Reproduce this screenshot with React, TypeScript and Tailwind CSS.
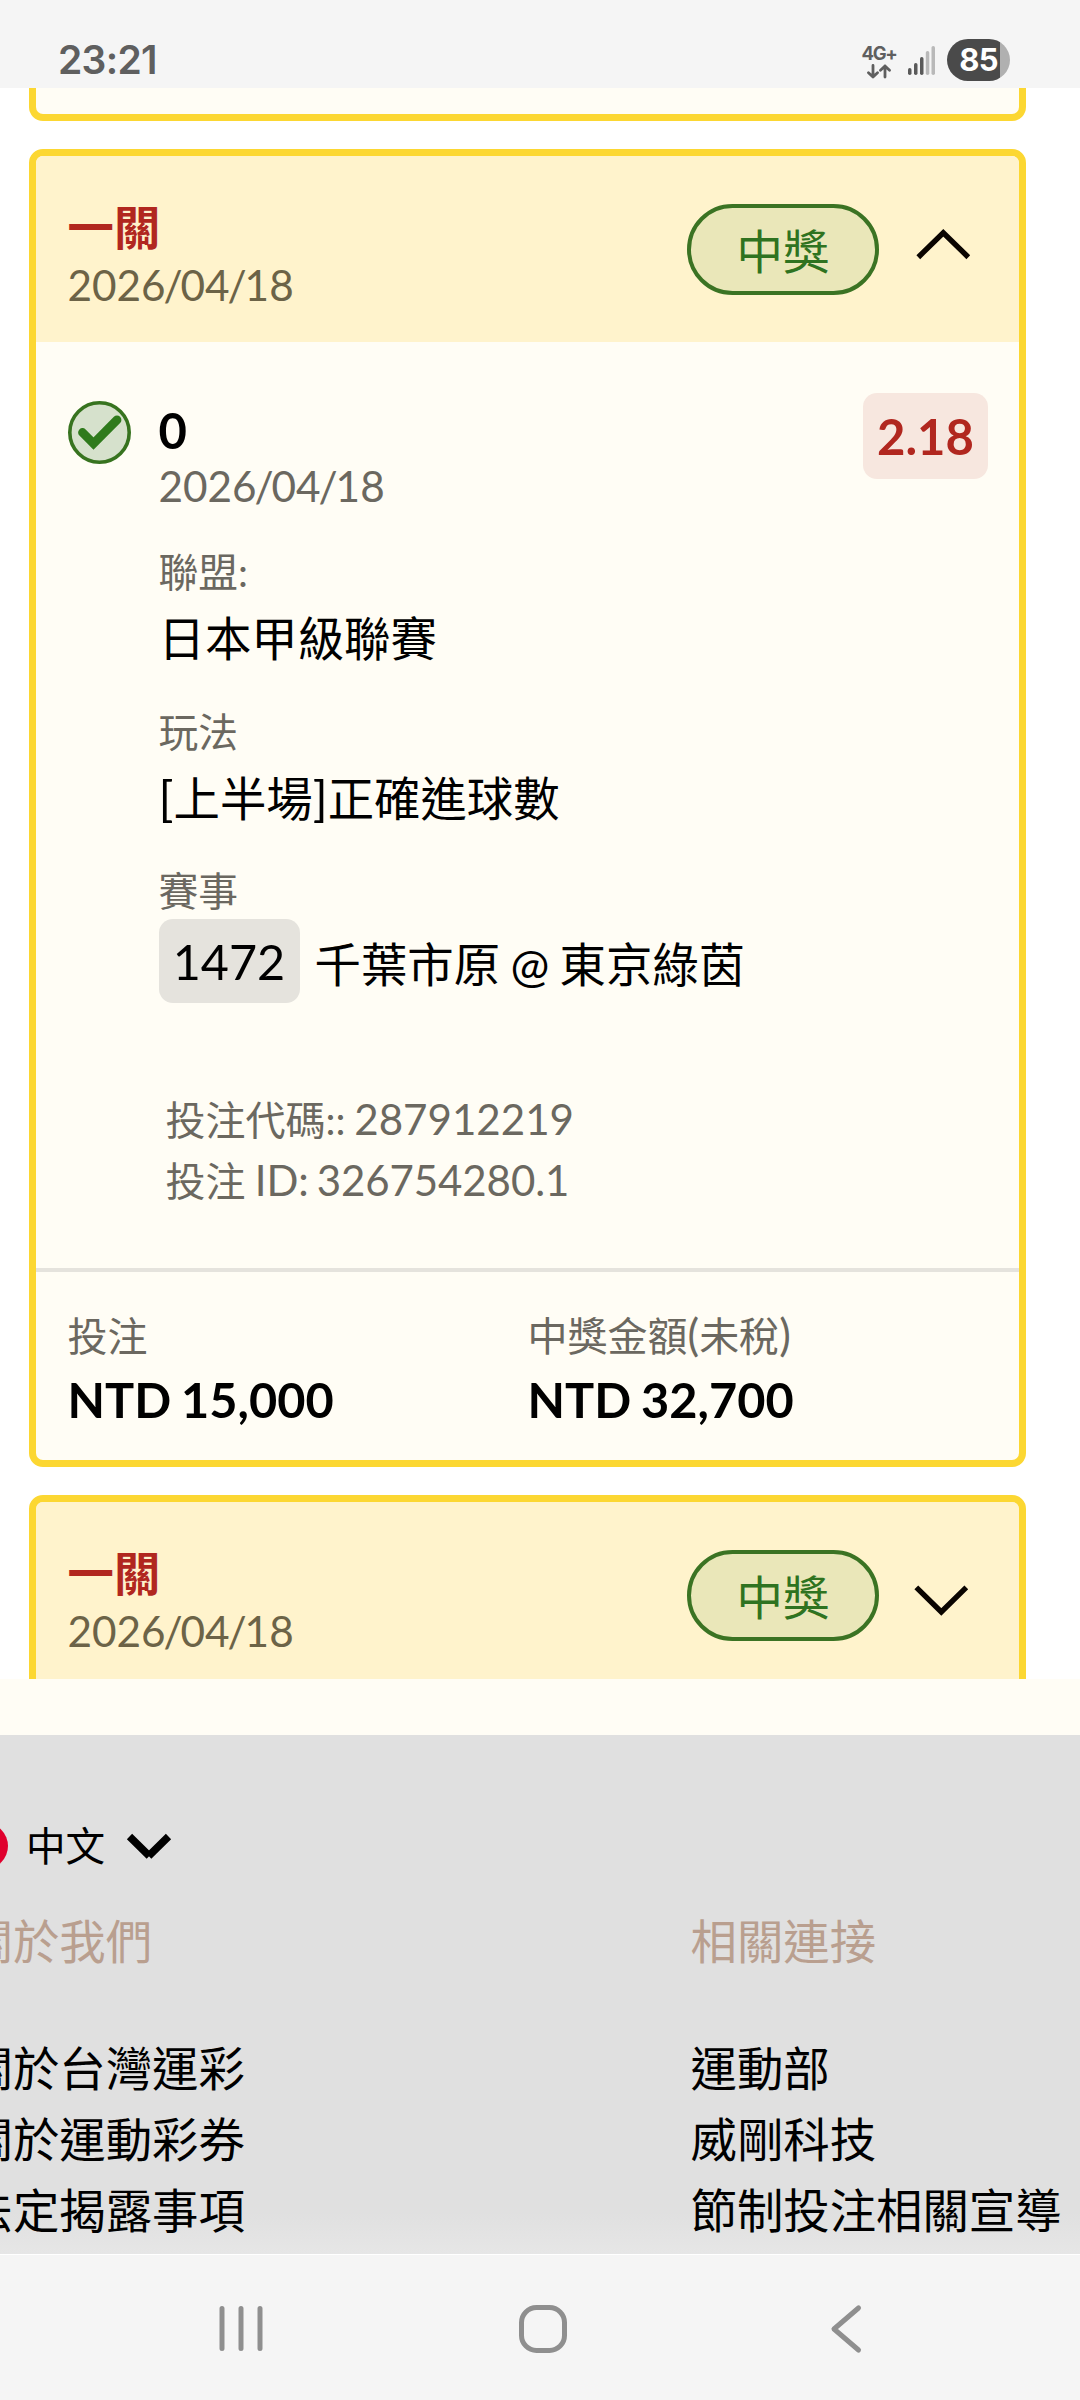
import React from 'react';

interface FooterColumnProps {
  title: string;
  links: string[];
}

const aboutLinks = ['關於台灣運彩', '關於運動彩券', '法定揭露事項'];
const relatedLinks = ['運動部', '威剛科技', '節制投注相關宣導'];

const StatusBar: React.FC = () => (
  <div className="h-[88px] shrink-0 bg-[#f5f5f5] flex items-start pl-[58px] pr-[70px] font-['Inter',sans-serif]">
    <span className="mt-[36px] text-[39px] leading-[48px] font-semibold tracking-[-0.7px] text-[#5f5f5f]">23:21</span>
    <div className="ml-auto mt-[39px] flex items-start">
      <div className="w-[34px] mr-[11px] flex flex-col items-center text-[#5f5f5f]">
        <span className="mt-[5px] text-[18.5px] leading-[18px] font-bold tracking-[-1.3px]">4G+</span>
        <svg className="mt-[2px]" width="24" height="15" viewBox="0 0 24 15" fill="none" stroke="currentColor" strokeWidth="2.8" strokeLinecap="round" strokeLinejoin="round">
          <path d="M6 1.5V13M1.5 8.8L6 13l4.5-4.2M18 13V2M13.5 6.2L18 2l4.5 4.2" />
        </svg>
      </div>
      <svg className="mt-[6px] mr-[12px]" width="28" height="31" viewBox="0 0 28 31">
        <rect x="1" y="23" width="3.5" height="7" rx="1.7" fill="#5a5a5a" />
        <rect x="7" y="18" width="3.5" height="12" rx="1.7" fill="#5a5a5a" />
        <rect x="13" y="12" width="3.5" height="18" rx="1.7" fill="#5a5a5a" />
        <rect x="18.8" y="6" width="3.5" height="24" rx="1.7" fill="#b9b9b9" />
        <rect x="24.5" y="1" width="3.5" height="29" rx="1.7" fill="#b9b9b9" />
      </svg>
      <div className="w-[63px] h-[42px] rounded-full overflow-hidden bg-[linear-gradient(to_right,#4a4a4a_84.5%,#b0b0b0_84.5%)] text-center text-[31px] leading-[42px] font-bold tracking-[-0.8px] text-white">
        85
      </div>
    </div>
  </div>
);

// slashes are tucked in towards the digits on both sides
const DateText: React.FC<{ value: string }> = ({ value }) => (
  <>
    {value.split('/').map((part, i) => (
      <React.Fragment key={i}>
        {i > 0 && <span className="-mx-[2.1px]">/</span>}
        {part}
      </React.Fragment>
    ))}
  </>
);

const TicketHeader: React.FC<{ open: boolean }> = ({ open }) => (
  <div className="h-[186px] bg-[#fff3cc] pl-[31.5px] pr-[46px] flex items-start">
    <div className="pt-[43px]">
      <p className="text-[46.4px] leading-[57px] font-bold text-[#b1271f]">一關</p>
      <p className="text-[42.3px] leading-[57px] text-[#6c6347]">
        <DateText value="2026/04/18" />
      </p>
    </div>
    <div className="mt-[48px] ml-auto mr-[34px] w-[192px] h-[91px] rounded-full border-4 border-[#3b7323] bg-[#eae7b9] text-center text-[46.4px] leading-[87px] text-[#2f7320]">
      中獎
    </div>
    <svg className="mt-[68px]" width="60" height="50" viewBox="0 0 60 50" fill="none" stroke="#0a0400" strokeWidth="5.4">
      {open ? <path d="M5.3 33.2L30.3 8.7L55.3 33.2" /> : <path d="M3.3 17.3L28.3 42L53.3 17.3" />}
    </svg>
  </div>
);

const Field: React.FC<{ label: string; children: React.ReactNode }> = ({ label, children }) => (
  <div>
    <p className="text-[39.8px] leading-[56px] text-[#6b6860]">{label}</p>
    {children}
  </div>
);

const TicketBody: React.FC = () => (
  <div className="pt-[58px] pl-[31.5px] pr-[31px] flex items-start">
    <div className="w-[91px] pt-[1px] shrink-0">
      <svg width="63" height="63" viewBox="0 0 63 63" fill="none">
        <circle cx="31.5" cy="31.5" r="29.7" fill="#d6e1cc" stroke="#37731f" strokeWidth="3.6" />
        <path d="M14.5 31.5L25.5 42.5L49 18.9" stroke="#2f7a1c" strokeWidth="8.8" strokeLinecap="round" />
      </svg>
    </div>
    <div className="flex-1">
      <div className="flex items-start justify-between">
        <div>
          <p className="text-[49px] leading-[60px] font-bold">0</p>
          <p className="text-[42.3px] leading-[51px] text-[#6b6860]">
            <DateText value="2026/04/18" />
          </p>
        </div>
        <div className="-mt-[7px] w-[125px] h-[86px] rounded-[14px] bg-[#f7e7df] text-center text-[49px] leading-[86px] font-bold text-[#b1271f]">
          2.18
        </div>
      </div>
      <div className="mt-[33px] flex flex-col gap-[27.5px]">
        <Field label="聯盟:">
          <p className="text-[46.4px] leading-[76px]">日本甲級聯賽</p>
        </Field>
        <Field label="玩法">
          <p className="text-[46.4px] leading-[76px]">
            <span className="text-[49px] leading-none">[</span>上半場<span className="text-[49px] leading-none">]</span>正確進球數
          </p>
        </Field>
        <Field label="賽事">
          <div className="h-[84px] flex items-center gap-[15px]">
            <span className="w-[141px] h-[84px] rounded-[14px] bg-[#e5e3dd] text-center text-[48.5px] leading-[85px]">1472</span>
            <span className="pt-[5px] text-[46.4px] leading-[60px] [word-spacing:-1.5px]">千葉市原 @ 東京綠茵</span>
          </div>
        </Field>
      </div>
      <div className="mt-[87px] pl-[7px] text-[40px] leading-[61px] text-[#6b6860]">
        <p>投注代碼:: <span className="-ml-[1.5px] text-[42.1px] leading-none">287912219</span></p>
        <p>投注 <span className="-ml-px text-[42px] leading-none [word-spacing:-2.5px] tracking-[-0.1px]">ID: 326754280.1</span></p>
      </div>
    </div>
  </div>
);

const Amount: React.FC<{ label: React.ReactNode; value: string }> = ({ label, value }) => (
  <div>
    <p className="text-[40px] leading-[50px] text-[#6b6860]">{label}</p>
    <p className="text-[48.7px] leading-[76px] font-bold [word-spacing:-2px]">{value}</p>
  </div>
);

const FooterColumn: React.FC<FooterColumnProps> = ({ title, links }) => (
  <div className="text-[46.4px] whitespace-nowrap">
    <h3 className="leading-[60px] text-[#b99f8f]">{title}</h3>
    <ul className="mt-[62px] leading-[70.8px]">
      {links.map((link) => (
        <li key={link}>{link}</li>
      ))}
    </ul>
  </div>
);

const App: React.FC = () => {
  return (
    <div className="w-[1080px] h-[2400px] overflow-hidden flex flex-col bg-white text-black font-['Lato','Noto_Sans_CJK_TC',sans-serif]">
      <StatusBar />

      <main className="h-[1591px] shrink-0 overflow-hidden pl-[29px] pr-[54px]">
        <div className="h-[33px] rounded-b-[14px] border-7 border-t-0 border-[#fcd732] bg-[#fffdf5]" />

        <section className="mt-7 h-[1318px] rounded-[14px] border-7 border-[#fcd732] bg-[#fffdf5] overflow-hidden flex flex-col">
          <TicketHeader open />
          <TicketBody />
          <div className="mt-auto border-t-4 border-[#e5e3dd] h-[192px] pt-[39px] pl-[31.5px] grid grid-cols-[460px_1fr]">
            <Amount label="投注" value="NTD 15,000" />
            <Amount
              label={<>中獎金額<span className="text-[43.5px] leading-none">(</span>未稅<span className="text-[43.5px] leading-none">)</span></>}
              value="NTD 32,700"
            />
          </div>
        </section>

        <section className="mt-7 h-[300px] rounded-[14px] border-7 border-[#fcd732] bg-[#fff3cc] overflow-hidden">
          <TicketHeader open={false} />
        </section>
      </main>

      <div className="h-[56px] shrink-0 bg-[#fffdf5]" />

      <footer className="h-[519px] shrink-0 overflow-hidden bg-[linear-gradient(to_bottom,#e0e0e0_92%,#e6e6e6)] pt-[80px]">
        <div className="-ml-[38px] flex items-center">
          <span className="size-[46px] rounded-full bg-[#e0002d]" />
          <span className="ml-[18px] pt-[1px] text-[39.6px] leading-[60px]">中文</span>
          <svg className="ml-[21px]" width="46" height="30" viewBox="0 0 46 30" fill="none" stroke="#000" strokeWidth="7.5">
            <path d="M3.5 5.5L23.3 25M42.5 5.5L22.7 25" />
          </svg>
        </div>
        <div className="mt-[35px] -ml-[33.5px] grid grid-cols-[724px_1fr]">
          <FooterColumn title="關於我們" links={aboutLinks} />
          <FooterColumn title="相關連接" links={relatedLinks} />
        </div>
      </footer>

      <nav className="flex-1 border-t border-white bg-[#f5f5f5] pt-[49px] pl-[217px] pr-[217px] flex items-start">
        <svg width="48" height="50" viewBox="0 0 48 50" stroke="#8f8f8f" strokeWidth="5" strokeLinecap="round">
          <path d="M5 4.5V44.5M24 4.5V44.5M43 4.5V44.5" />
        </svg>
        <svg className="ml-[253px]" width="50" height="50" viewBox="0 0 50 50" fill="none" stroke="#8f8f8f" strokeWidth="5">
          <rect x="3.5" y="3.5" width="43" height="43" rx="15" />
        </svg>
        <svg className="ml-auto" width="34" height="50" viewBox="0 0 34 50" fill="none" stroke="#8f8f8f" strokeWidth="5" strokeLinecap="round" strokeLinejoin="round">
          <path d="M29.5 4L5 25L29.5 46" />
        </svg>
      </nav>
    </div>
  );
};

export default App;
